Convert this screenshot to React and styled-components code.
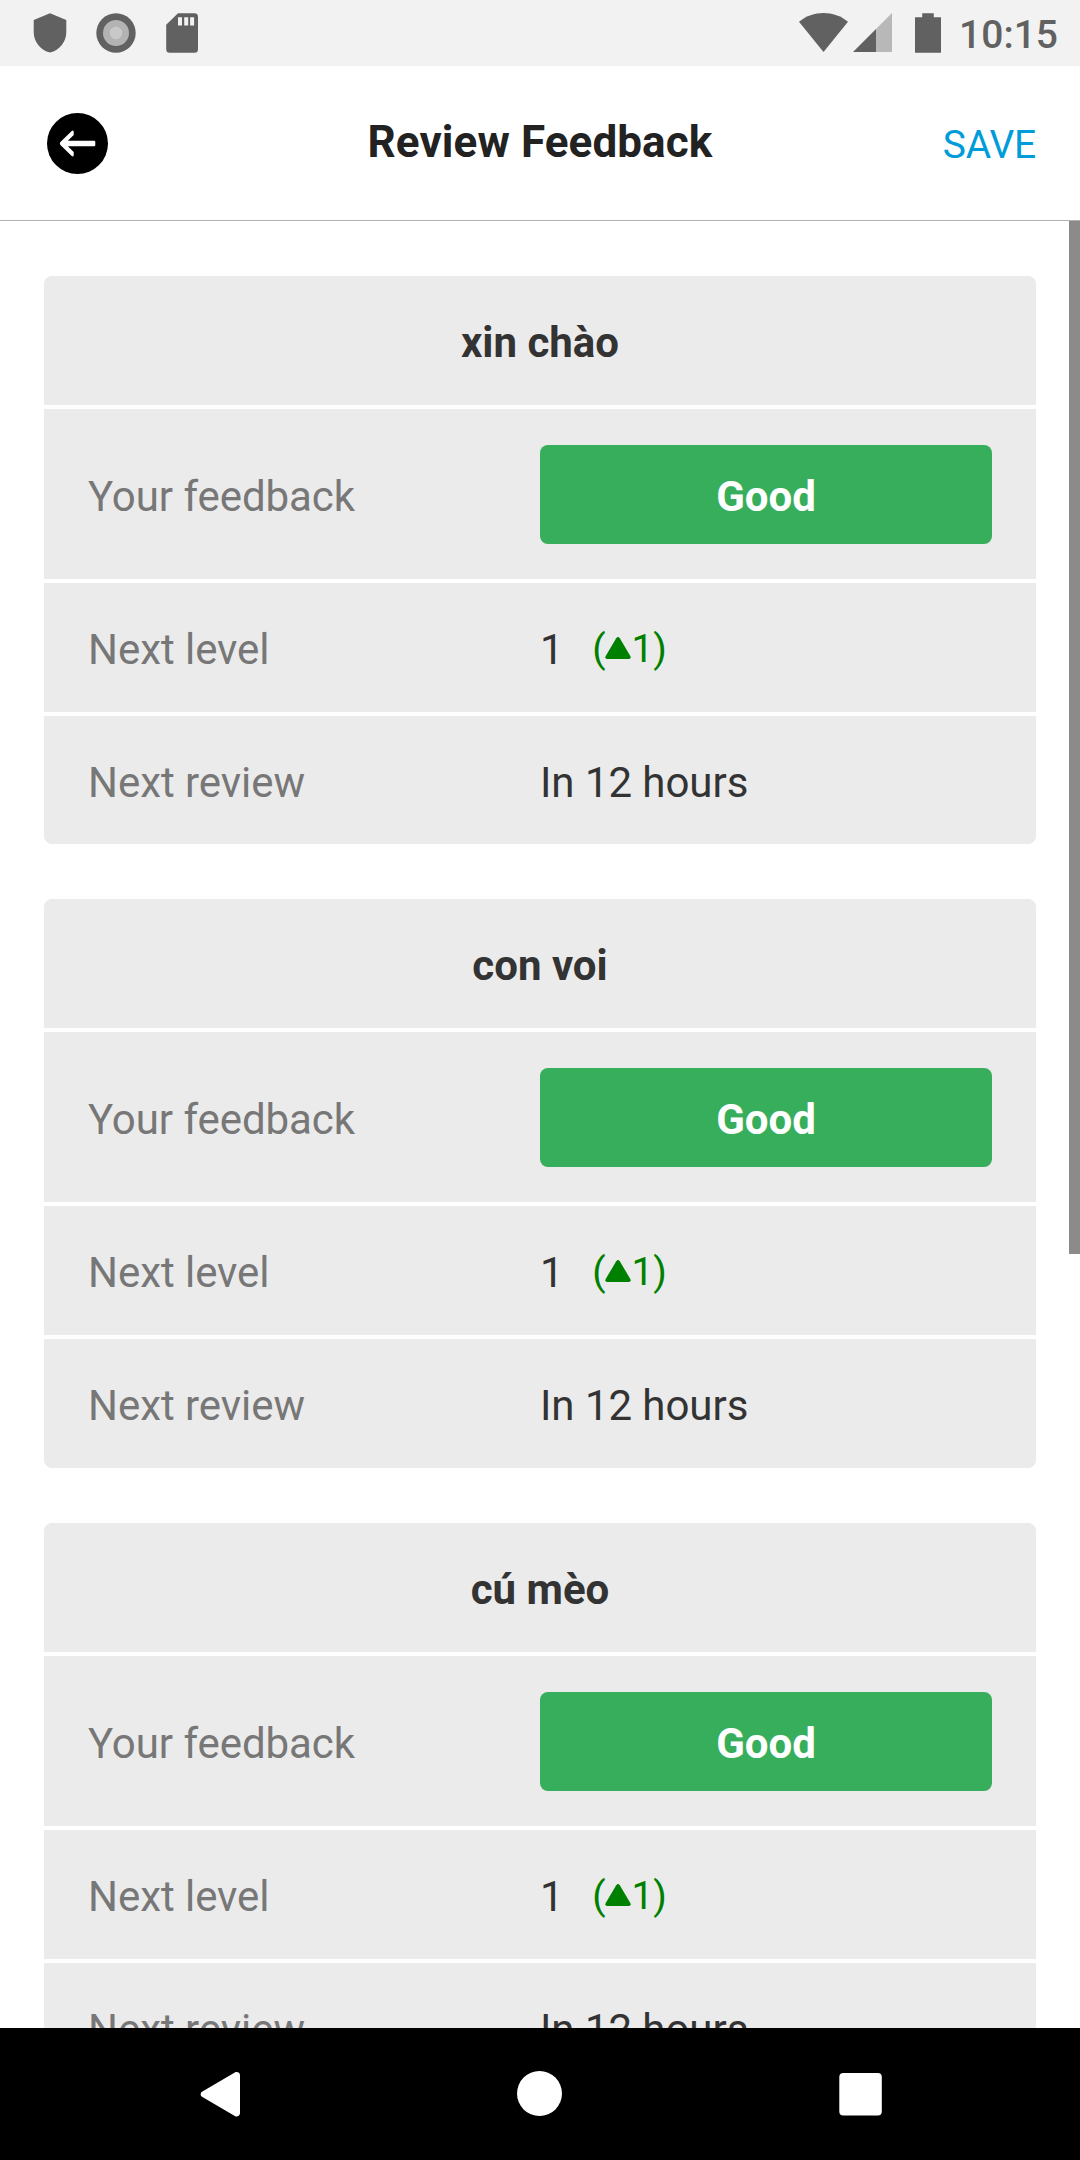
import React from "react";
import styled, { createGlobalStyle } from "styled-components";

const GlobalStyle = createGlobalStyle`
  * { box-sizing: border-box; }
  body { margin: 0; background: #fff; font-family: Roboto, "Liberation Sans", sans-serif; }
`;

const Screen = styled.div`
  display: flex;
  flex-direction: column;
  width: 1080px;
  height: 2160px;
  overflow: hidden;
  background: #fff;
`;

const StatusBar = styled.div`
  display: flex;
  flex: none;
  justify-content: space-between;
  height: 66px;
  padding: 0 22px 0 29px;
  background: #f2f2f2;
  color: #616161;
`;

const StatusGroup = styled.div`
  display: flex;
  align-items: center;
  gap: ${(p) => p.$gap || 0}px;
`;

const Clock = styled.span`
  width: 117px;
  padding-top: 4px;
  font-size: 39px;
  line-height: 46px;
  font-weight: 500;
  text-align: right;
`;

const Icon = styled.svg`
  display: block;
  flex: none;
`;

const Header = styled.header`
  display: grid;
  flex: none;
  grid-template-columns: 1fr auto 1fr;
  align-items: center;
  height: 155px;
  padding: 1px 44px 0;
  border-bottom: 1px solid #b2b2b2;
`;

const BackButton = styled.button`
  display: flex;
  justify-self: start;
  margin-left: 3px;
  padding: 0;
  border: 0;
  background: none;
`;

const Title = styled.h1`
  margin: 0;
  padding-bottom: 3px;
  color: #222;
  font-size: 44px;
  line-height: 52px;
  font-weight: 700;
  letter-spacing: 0.1px;
`;

const SaveButton = styled.button`
  justify-self: end;
  padding: 3px 0 0;
  border: 0;
  background: none;
  color: #009cda;
  font: 400 39px/46px Roboto, "Liberation Sans", sans-serif;
  letter-spacing: -0.2px;
`;

const Body = styled.main`
  display: flex;
  flex: 1;
  min-height: 0;
  overflow: hidden;
`;

const List = styled.div`
  display: flex;
  flex: 1;
  flex-direction: column;
  gap: 55px;
  padding: 55px 33px 0 44px;
`;

const ScrollThumb = styled.div`
  width: 11px;
  height: 1033px;
  background: #8b8b8b;
`;

const Card = styled.section`
  display: flex;
  flex: none;
  flex-direction: column;
  gap: 4px;
  border-radius: 8px;
  overflow: hidden;
`;

const Word = styled.h2`
  height: 129px;
  margin: 0;
  padding-top: 42px;
  background: #ebebeb;
  color: #333;
  font-size: 42px;
  line-height: 49px;
  font-weight: 700;
  text-align: center;
`;

const Row = styled.div`
  display: flex;
  align-items: center;
  height: ${(p) => p.$height}px;
  padding: ${(p) => p.$offset || 0}px 44px 0;
  background: #ebebeb;
  color: #333;
  font-size: 42px;
  line-height: 49px;
  letter-spacing: -0.05px;
`;

const Label = styled.div`
  flex: 1;
  padding-top: ${(p) => p.$shift || 0}px;
  color: #777;
`;

const Value = styled.div`
  display: flex;
  flex: 1;
  align-items: center;
  padding-top: ${(p) => p.$shift || 0}px;
`;

const Rating = styled.button`
  width: 100%;
  height: 99px;
  padding: 4px 0 0;
  border: 0;
  border-radius: 8px;
  background: #37ae5b;
  color: #fff;
  font: 700 42px/49px Roboto, "Liberation Sans", sans-serif;
`;

const Change = styled.span`
  display: flex;
  align-items: center;
  margin-left: 28.6px;
  color: green;
  font-size: 39px;
`;

const Arrow = styled(Icon)`
  margin-bottom: 3px;
`;

const NavBar = styled.nav`
  display: flex;
  flex: none;
  justify-content: space-between;
  height: 132px;
  padding: 43px 198px 0 200px;
  background: #000;
`;

const ShieldIcon = () => (
  <Icon width="42" height="42" viewBox="0 0 42 42" fill="currentColor">
    <path d="M21 1.2 37.3 8v12c0 9.500-6.500 18.300-16.300 20.600C11.200 38.300 4.700 29.500 4.700 20V8z" />
  </Icon>
);

const RecordIcon = () => (
  <Icon width="42" height="42" viewBox="0 0 42 42">
    <circle cx="21" cy="21" r="19.700" fill="#616161" />
    <circle cx="21" cy="21" r="13" fill="#b3b3b3" />
    <circle cx="21" cy="21" r="6.200" fill="#c9c9c9" />
  </Icon>
);

const SdCardIcon = () => (
  <Icon width="42" height="42" viewBox="0 0 42 42" fill="currentColor">
    <path
      fillRule="evenodd"
      d="M17 1.300h16.500a3.500 3.500 0 0 1 3.500 3.500v32.400a3.500 3.500 0 0 1-3.500 3.500H8.700a3.500 3.500 0 0 1-3.500-3.500V12.800zM17 5.300v8.200h4V5.300zm6.200 0v8.200h4V5.300zm5.900 0v8.200h4V5.300z"
    />
  </Icon>
);

const WifiIcon = () => (
  <Icon width="49" height="42" viewBox="0 0 49 42" fill="currentColor">
    <path d="M24.500 40 0 9.800C7.500 3.900 15.500 1.100 24.500 1.100S41.500 3.900 49 9.800z" />
  </Icon>
);

const SignalIcon = () => (
  <Icon width="40" height="42" viewBox="0 0 40 42" fill="currentColor">
    <path opacity=".4" d="M40 1v39H24V17z" />
    <path d="M24 17v23H1z" />
  </Icon>
);

const BatteryIcon = () => (
  <Icon width="26" height="42" viewBox="0 0 26 42" fill="currentColor">
    <path d="M7.200 1.200h11.600v4H26v35.600H0V5.200h7.200z" />
  </Icon>
);

const BackIcon = () => (
  <Icon width="61" height="61" viewBox="0 0 61 61">
    <circle cx="30.500" cy="30.500" r="30.500" />
    <path
      d="M13.400 29 24.700 17.900Q26.700 16.700 26.700 19V22L20.900 27.700H47Q48.300 27.700 48.300 29V31.900Q48.300 33.200 47 33.200H20.900L26.700 38.900V42Q26.700 44.200 24.700 43L13.400 31.900Q12.200 30.500 13.400 29z"
      fill="#fff"
    />
  </Icon>
);

const UpIcon = () => (
  <Arrow width="26" height="22" viewBox="0 0 26 22" fill="currentColor">
    <path d="M11.200 1.200Q13-1 14.800 1.200L25.300 19Q26.500 21.800 23.800 22H2.200Q-.500 21.800.700 19z" />
  </Arrow>
);

const words = ["xin chào", "con voi", "cú mèo"];

const ReviewCard = ({ word }) => (
  <Card>
    <Word>{word}</Word>
    <Row $height={170}>
      <Label $shift={5}>Your feedback</Label>
      <Value $shift={0.6}>
        <Rating>Good</Rating>
      </Value>
    </Row>
    <Row $height={129} $offset={4}>
      <Label>Next level</Label>
      <Value>
        1
        <Change>
          (<UpIcon />1)
        </Change>
      </Value>
    </Row>
    <Row $height={128.4} $offset={4.4}>
      <Label>Next review</Label>
      <Value>In 12 hours</Value>
    </Row>
  </Card>
);

export default function App() {
  return (
    <Screen>
      <GlobalStyle />
      <StatusBar>
        <StatusGroup $gap={24}>
          <ShieldIcon />
          <RecordIcon />
          <SdCardIcon />
        </StatusGroup>
        <StatusGroup>
          <StatusGroup $gap={23}>
            <StatusGroup $gap={4}>
              <WifiIcon />
              <SignalIcon />
            </StatusGroup>
            <BatteryIcon />
          </StatusGroup>
          <Clock>10:15</Clock>
        </StatusGroup>
      </StatusBar>
      <Header>
        <BackButton aria-label="Back">
          <BackIcon />
        </BackButton>
        <Title>Review Feedback</Title>
        <SaveButton>SAVE</SaveButton>
      </Header>
      <Body>
        <List>
          {words.map((word) => (
            <ReviewCard key={word} word={word} />
          ))}
        </List>
        <ScrollThumb />
      </Body>
      <NavBar>
        <Icon width="42" height="47" viewBox="0 0 42 47" fill="#fff">
          <path d="M2 20.800 34.800 1.600C37 .300 40 1.600 40 4.300V42.300C40 45 37 46.300 34.800 45L2 25.800C.200 24.600.200 22 2 20.800z" />
        </Icon>
        <Icon width="46" height="46" viewBox="0 0 46 46" fill="#fff">
          <circle cx="22.500" cy="22.500" r="22.500" />
        </Icon>
        <Icon width="44" height="46" viewBox="0 0 44 46" fill="#fff">
          <rect x="1.300" y="2" width="42.500" height="42.500" rx="4" />
        </Icon>
      </NavBar>
    </Screen>
  );
}
